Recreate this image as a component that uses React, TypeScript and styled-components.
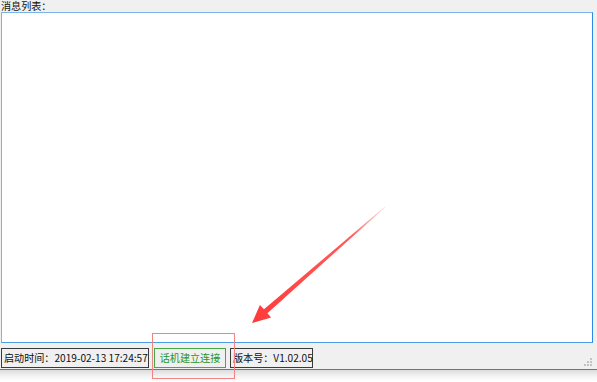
import React from "react";
import styled, { createGlobalStyle } from "styled-components";

const GlobalStyle = createGlobalStyle`
  html, body {
    margin: 0;
    padding: 0;
    background: #ffffff;
  }
  body {
    font-family: "Noto Sans CJK SC", "Microsoft YaHei", sans-serif;
    font-size: 10.1px;
  }
`;

const Page = styled.div`
  position: relative;
  width: 597px;
  height: 382px;
  overflow: hidden;
  display: flex;
  flex-direction: column;
`;

const Window = styled.div`
  height: 369px;
  background: #f0f0f0;
  border-bottom: 1px solid #2f86d8;
  display: flex;
  flex-direction: column;
`;

const Shadow = styled.div`
  flex: 1;
  background: linear-gradient(#dcdcdc, #f6f6f6 60%, #ffffff);
`;

const Caption = styled.div`
  height: 12px;
  line-height: 12px;
  padding-left: 1px;
  color: #111;
  white-space: nowrap;
`;

const MessageBox = styled.div`
  height: 329px;
  margin: 0 4px 0 1px;
  background: #ffffff;
  border: 1px solid #7ab4ea;
  border-right-color: #2a8ae6;
  border-bottom-color: #4a9de6;
`;

const StatusBar = styled.div`
  position: relative;
  flex: 1;
  display: flex;
  align-items: center;
  padding: 3px 0 0 1px;
`;

const StatusItem = styled.div<{ $w: number; $gap: number }>`
  box-sizing: border-box;
  width: ${(p) => p.$w}px;
  height: 20px;
  margin-right: ${(p) => p.$gap}px;
  border: 1px solid #3a3a3a;
  display: flex;
  align-items: center;
  padding-left: 2px;
  color: #111;
  white-space: nowrap;
`;

const ConnectButton = styled.div`
  box-sizing: border-box;
  width: 72px;
  height: 20px;
  margin-right: 4px;
  border: 1px solid #46a846;
  display: flex;
  align-items: center;
  justify-content: center;
  color: #26962a;
  white-space: nowrap;
`;

const Grip = styled.svg`
  position: absolute;
  right: 4px;
  bottom: 2px;
`;

const Highlight = styled.div`
  position: absolute;
  left: 152px;
  top: 333px;
  width: 81px;
  height: 44px;
  border: 1px solid #f08484;
`;

const Overlay = styled.svg`
  position: absolute;
  left: 0;
  top: 0;
  pointer-events: none;
`;

export default function App() {
  return (
    <Page>
      <GlobalStyle />
      <Window>
        <Caption>消息列表：</Caption>
        <MessageBox />
        <StatusBar>
          <StatusItem $w={148} $gap={5}>启动时间：2019-02-13 17:24:57</StatusItem>
          <ConnectButton>话机建立连接</ConnectButton>
          <StatusItem $w={83} $gap={0}>版本号：V1.02.05</StatusItem>
          <Grip width="10" height="10" viewBox="0 0 10 10">
            {[
              [7, 1],
              [7, 4],
              [4, 4],
              [7, 7],
              [4, 7],
              [1, 7],
            ].map(([x, y], i) => (
              <rect key={i} x={x} y={y} width="2" height="2" fill="#c2c2c2" />
            ))}
          </Grip>
        </StatusBar>
      </Window>
      <Shadow />
      <Highlight />
      <Overlay width="597" height="382" viewBox="0 0 597 382">
        <defs>
          <linearGradient id="fade" x1="385" y1="207" x2="252" y2="323" gradientUnits="userSpaceOnUse">
            <stop offset="0" stopColor="#ff4040" stopOpacity="0.15" />
            <stop offset="0.25" stopColor="#ff4040" stopOpacity="0.85" />
            <stop offset="1" stopColor="#ff3a3a" stopOpacity="1" />
          </linearGradient>
        </defs>
        <polygon
          points="385.3,207.2 267.4,313.3 271.2,317.6 252,323 259.9,305 264,309.3 384.7,206.8"
          fill="url(#fade)"
        />
      </Overlay>
    </Page>
  );
}
